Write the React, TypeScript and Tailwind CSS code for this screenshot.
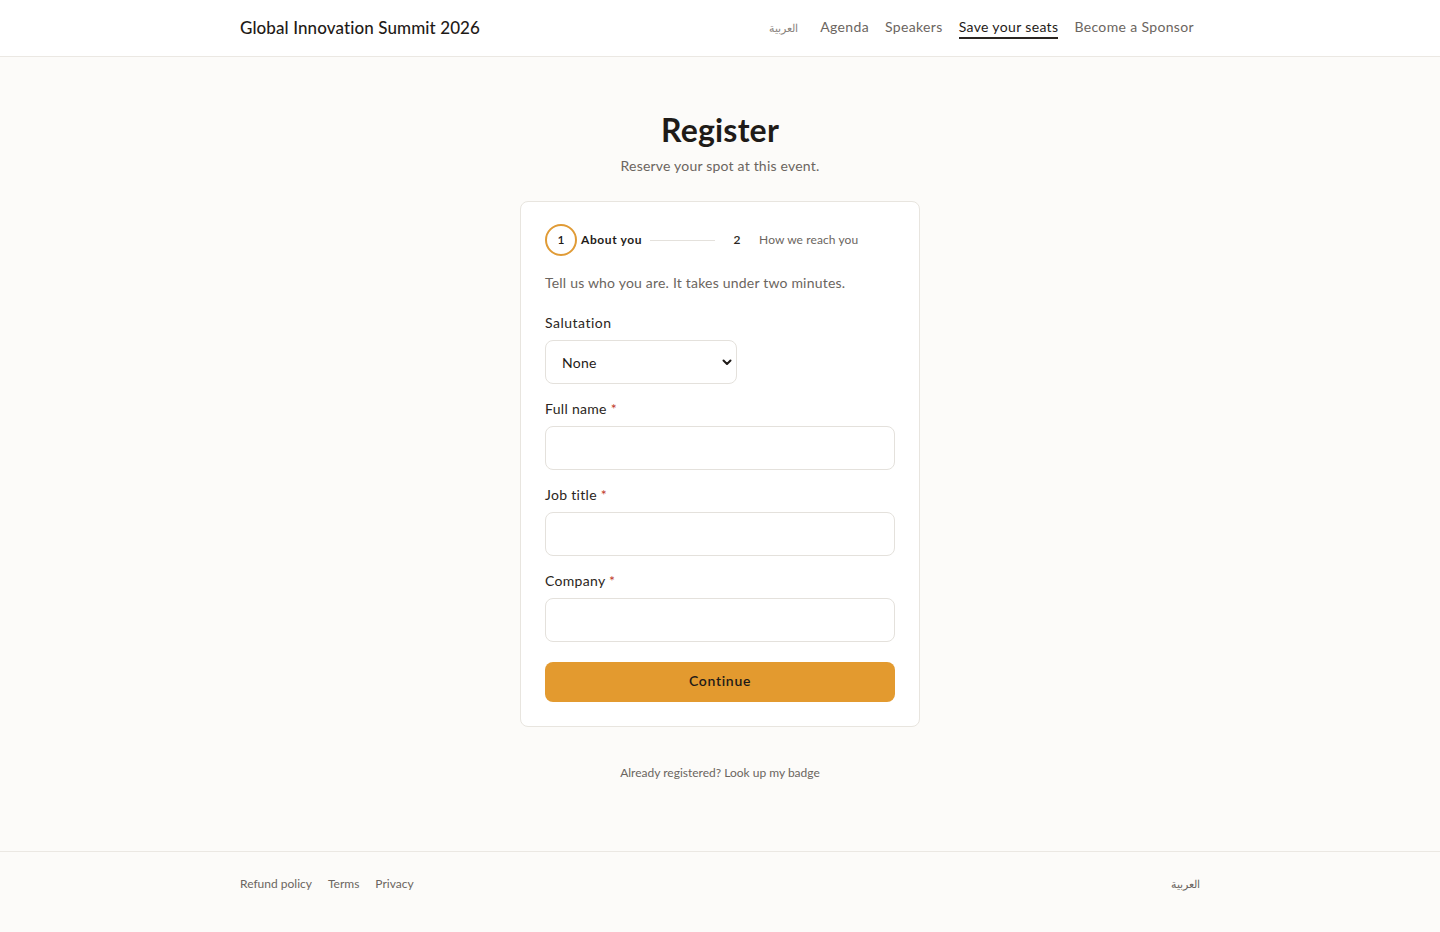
import { useState } from 'react';

const font = { fontFamily: 'Lato, "Noto Sans", sans-serif' };

function Field({ label, required = false }: { label: string; required?: boolean }) {
    return (
        <div className="flex flex-col gap-[7px]">
            <label className="text-[14px] leading-[20px] tracking-[0.3px] text-[#2a2521]">
                {label}
                {required && <span className="text-[#c0392b]"> *</span>}
            </label>
            <input
                type="text"
                className="h-[44px] w-full rounded-lg border border-[#e4e1dc] bg-white px-4 text-[14px] focus:outline-none"
            />
        </div>
    );
}

export default function App() {
    const [salutation, setSalutation] = useState('None');

    return (
        <div className="min-h-[932px] flex flex-col bg-[#fcfbf9] text-[#1f1b18]" style={font}>
            <header className="h-[57px] border-b border-[#ebe8e3] bg-white">
                <div className="mx-auto flex h-full max-w-[960px] items-center justify-between">
                    <span className="text-[17px] font-medium tracking-[0.1px] text-[#1f1b18]">
                        Global Innovation Summit 2026
                    </span>
                    <nav className="mr-[6px] flex items-center gap-4 text-[14px] leading-[20px] tracking-[0.35px] text-[#6b6560]">
                        <span className="mr-1.5 text-[11px] tracking-normal text-[#8a847e]" lang="ar" dir="rtl">العربية</span>
                        <a className="cursor-pointer border-b-2 border-transparent">Agenda</a>
                        <a className="cursor-pointer border-b-2 border-transparent">Speakers</a>
                        <a className="cursor-pointer border-b-2 border-[#2a2521] text-[#1f1b18]">Save your seats</a>
                        <a className="cursor-pointer border-b-2 border-transparent">Become a Sponsor</a>
                    </nav>
                </div>
            </header>

            <main className="flex flex-col items-center pt-[54px]">
                <h1 className="text-[32px] font-bold leading-[38px] tracking-[0.2px] text-[#1f1b18]">Register</h1>
                <p className="mt-[7px] text-[14px] leading-[20px] tracking-[0.2px] text-[#6b6560]">Reserve your spot at this event.</p>

                <div className="mt-[25px] w-[400px] rounded-lg border border-[#e8e5df] bg-white px-6 pb-6 pt-[22px]">
                    <div className="flex items-center">
                        <div className="flex h-8 w-8 items-center justify-center rounded-full border-2 border-[#e09b36] text-[12px] font-semibold">
                            1
                        </div>
                        <span className="ml-1 text-[12px] font-bold tracking-[0.6px] text-[#1f1b18]">About you</span>
                        <div className="mx-2 h-px w-[65px] bg-[#e4e1dc]" />
                        <div className="ml-[-2px] flex h-8 w-8 items-center justify-center text-[12px] font-semibold text-[#2a2521]">2</div>
                        <span className="ml-1.5 text-[12px] tracking-[0.1px] text-[#6b6560]">How we reach you</span>
                    </div>

                    <p className="mt-[17px] text-[14px] leading-[20px] tracking-[0.2px] text-[#6b6560]">Tell us who you are. It takes under two minutes.</p>

                    <div className="mt-[20px] flex flex-col gap-[15px]">
                        <div className="flex flex-col gap-[7px]">
                            <label className="text-[14px] leading-[20px] tracking-[0.5px] text-[#2a2521]">Salutation</label>
                            <div className="relative w-[192px]">
                                <select
                                    value={salutation}
                                    onChange={(e) => setSalutation(e.target.value)}
                                    className="h-[44px] w-full appearance-none rounded-lg border border-[#e4e1dc] bg-white pl-4 pr-8 text-[14px] tracking-[0.3px] text-[#1f1b18] focus:outline-none"
                                >
                                    <option>None</option>
                                    <option>Mr.</option>
                                    <option>Ms.</option>
                                    <option>Dr.</option>
                                </select>
                                <svg
                                    className="pointer-events-none absolute right-[4px] top-1/2 h-3 w-3 -translate-y-1/2"
                                    viewBox="0 0 12 12"
                                    fill="none"
                                    stroke="#1f1b18"
                                    strokeWidth="2"
                                    strokeLinecap="round"
                                    strokeLinejoin="round"
                                >
                                    <path d="M2.5 4.5 6 8l3.5-3.5" />
                                </svg>
                            </div>
                        </div>
                        <Field label="Full name" required />
                        <Field label="Job title" required />
                        <Field label="Company" required />
                    </div>

                    <button
                        type="button"
                        className="mt-5 h-10 w-full rounded-lg bg-[#e39a2f] pb-[3px] text-[14px] font-semibold tracking-[0.7px] text-[#1f1b18]"
                    >
                        Continue
                    </button>
                </div>

                <p className="mt-[38px] text-[12px] leading-4 text-[#6b6560]">Already registered? Look up my badge</p>
            </main>

            <footer className="mt-[70px] flex-1 border-t border-[#ebe8e3]">
                <div className="mx-auto flex max-w-[960px] items-center justify-between pt-[24px] text-[12px] leading-4 text-[#6b6560]">
                    <div className="flex gap-4">
                        <a>Refund policy</a>
                        <a>Terms</a>
                        <a>Privacy</a>
                    </div>
                    <span className="text-[11px] leading-4" lang="ar" dir="rtl">العربية</span>
                </div>
            </footer>
        </div>
    );
}
